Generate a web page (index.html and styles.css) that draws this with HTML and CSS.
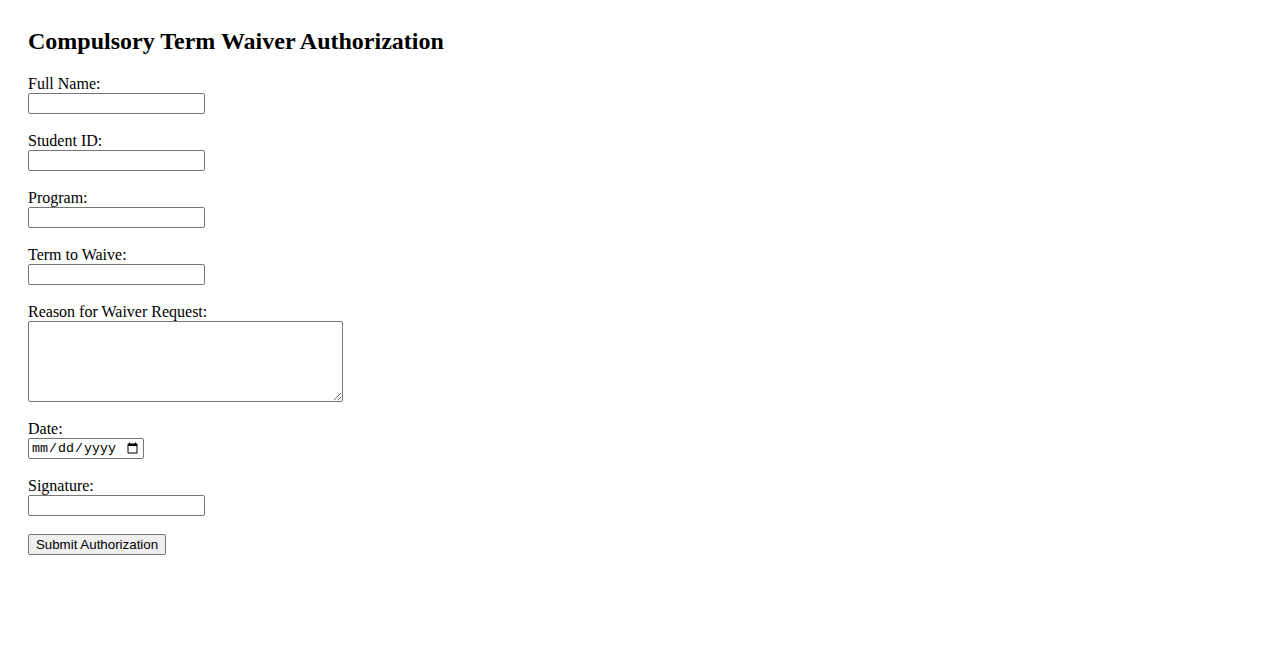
FILE: index.html
```html
<!DOCTYPE html>
<html>
<head>
<meta charset="utf-8">
<title>Compulsory Term Waiver Authorization</title>
<link rel="stylesheet" href="styles.css">
</head>
<body>
<h2 class="title">Compulsory Term Waiver Authorization</h2>
<form class="form">
<label for="name">Full Name:</label><br>
<input class="field" type="text" id="name"><br><br>
<label for="sid">Student ID:</label><br>
<input class="field" type="text" id="sid"><br><br>
<label for="prog">Program:</label><br>
<input class="field" type="text" id="prog"><br><br>
<label for="term">Term to Waive:</label><br>
<input class="field" type="text" id="term"><br><br>
<label for="reason">Reason for Waiver Request:</label><br>
<textarea class="area" id="reason"></textarea><br><br>
<label for="date">Date:</label><br>
<input class="datefield" type="date" id="date"><br><br>
<label for="sig">Signature:</label><br>
<input class="field" type="text" id="sig"><br><br>
<button class="submit" type="submit">Submit Authorization</button>
</form>
</body>
</html>
```
FILE: styles.css
```css
body {
  margin: 8px;
  padding: 20px;
  font-family: "Liberation Serif", "Times New Roman", serif;
  font-size: 16px;
  color: #000;
  background: #fff;
}
.title {
  font-size: 24px;
  font-weight: bold;
  margin: 0 0 20px 0;
}
.form {
  margin: 0;
}
.field {
  box-sizing: border-box;
  width: 177px;
  height: 21px;
  border: 1px solid #767676;
  border-radius: 2px;
  padding: 1px 2px;
  font-family: "Liberation Sans", Arial, sans-serif;
  font-size: 13.33px;
  margin: 0;
}
.area {
  box-sizing: border-box;
  width: 315px;
  height: 81px;
  border: 1px solid #767676;
  border-radius: 2px;
  padding: 2px;
  font-family: "Liberation Mono", monospace;
  font-size: 13.33px;
  margin: 0;
  vertical-align: bottom;
}
.datefield {
  box-sizing: border-box;
  width: 116px;
  height: 21px;
  border: 1px solid #767676;
  border-radius: 2px;
  padding: 1px 2px;
  font-family: "Liberation Mono", monospace;
  font-size: 13.33px;
  margin: 0;
}
.submit {
  box-sizing: border-box;
  width: 138px;
  height: 21px;
  border: 1px solid #767676;
  border-radius: 2px;
  background: #efefef;
  padding: 1px 6px;
  font-family: "Liberation Sans", Arial, sans-serif;
  font-size: 13.33px;
  color: #000;
  margin: 0;
}
```
